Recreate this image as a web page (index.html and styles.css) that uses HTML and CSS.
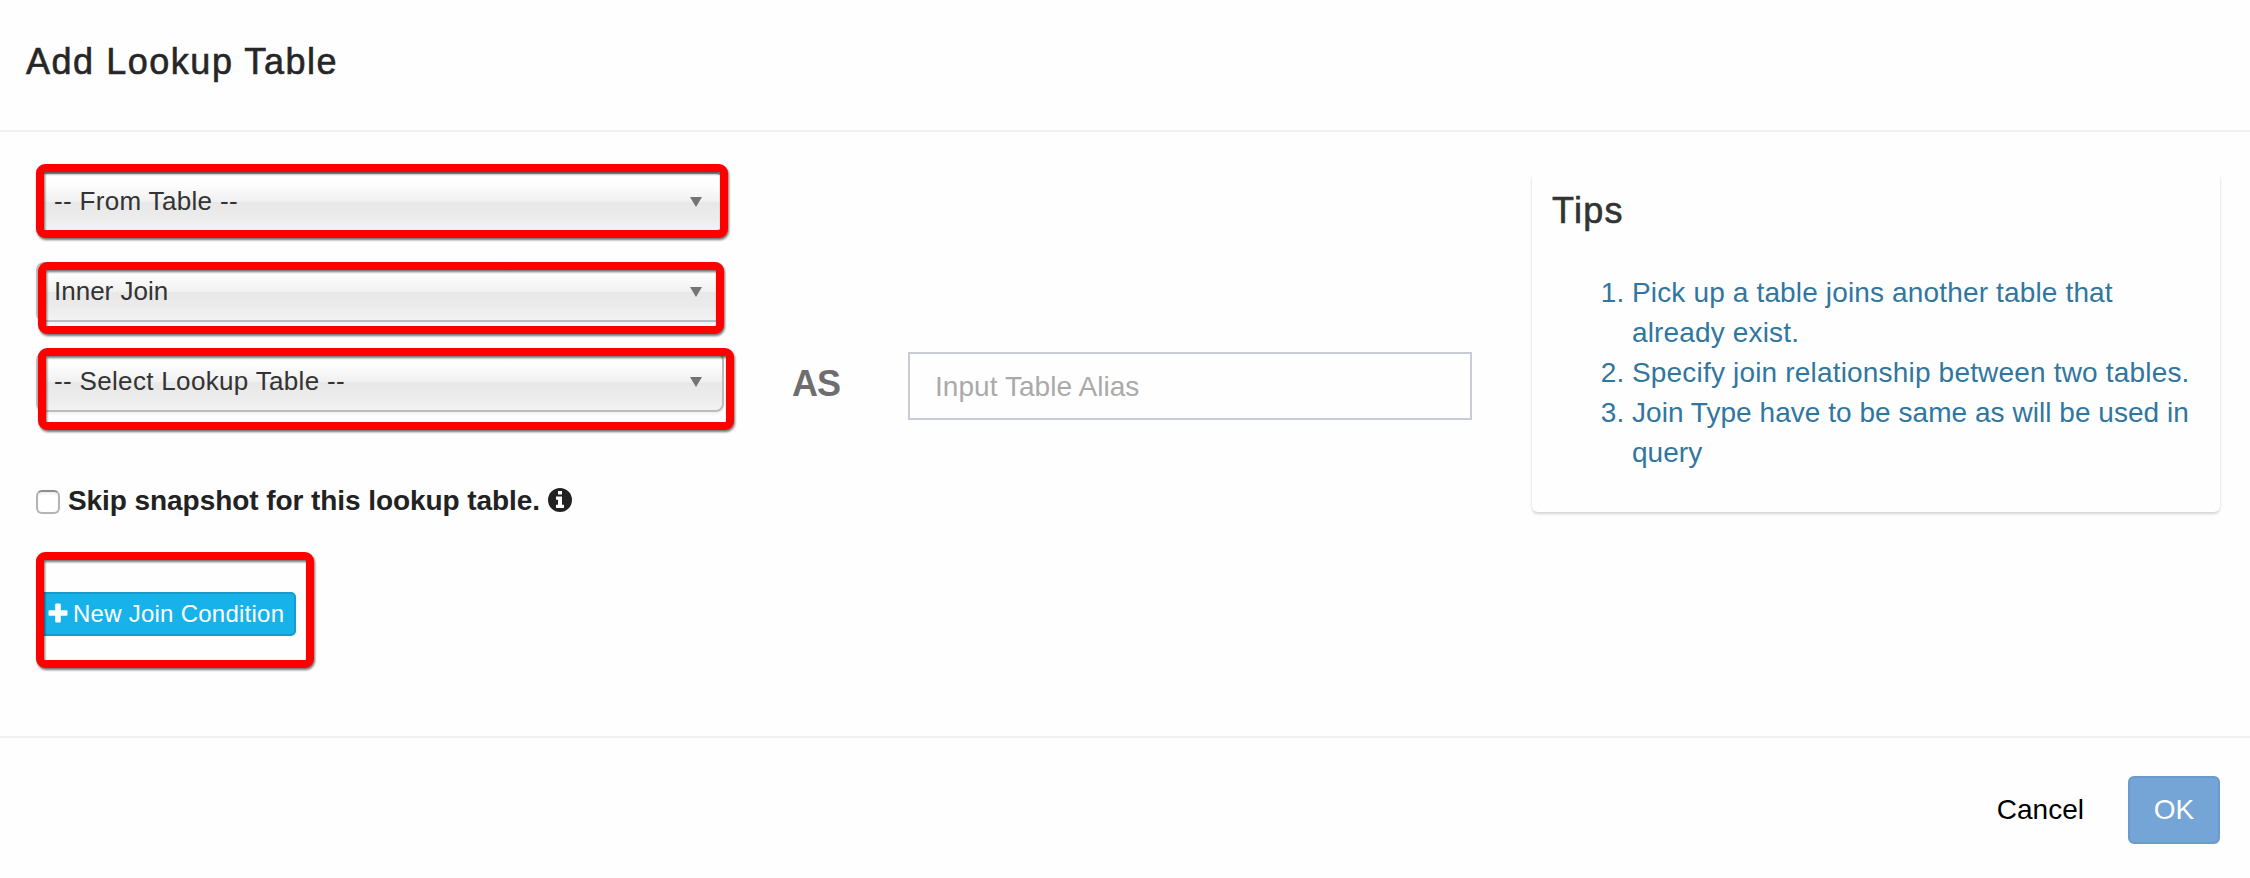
FILE: index.html
```html
<!DOCTYPE html>
<html lang="en">
<head>
<meta charset="utf-8">
<title>Add Lookup Table</title>
<link rel="stylesheet" href="styles.css">
</head>
<body>
<div class="dialog">
  <header class="dialog-header"><h1 class="dialog-title">Add Lookup Table</h1></header>
  <main class="dialog-body">
    <section class="form">
      <div class="select"><span class="label label-from">-- From Table --</span><i class="caret"></i><b class="mark mark-from"></b></div>
      <div class="select"><span class="label label-join">Inner Join</span><i class="caret"></i><b class="mark mark-join"></b></div>
      <div class="lookup-row">
        <div class="select"><span class="label label-lookup">-- Select Lookup Table --</span><i class="caret"></i><b class="mark mark-lookup"></b></div>
        <span class="as">AS</span>
        <div class="alias"><span>Input Table Alias</span></div>
      </div>
      <div class="skip-row">
        <i class="checkbox"></i>
        <span class="skip-text">Skip snapshot for this lookup table.</span>
        <svg class="info" viewBox="0 0 24 24"><circle cx="12" cy="12" r="12" fill="#222"/><path d="M10 3h4v3.4h-4zM8 8.6h6v8.2h2V20H8v-3.2h2v-5H8z" fill="#fefefe"/></svg>
      </div>
      <div class="condition">
        <div class="new-btn">
          <svg class="plus" viewBox="0 0 20 20"><path d="M8.2 0.5h3.6q1 0 1 1v5.7h5.7q1 0 1 1v3.6q0 1-1 1h-5.7v5.7q0 1-1 1H8.2q-1 0-1-1v-5.7H1.5q-1 0-1-1V8.2q0-1 1-1h5.7V1.5q0-1 1-1z" fill="#fff"/></svg>
          <span class="new-text">New Join Condition</span>
        </div>
        <b class="mark mark-new"></b>
      </div>
    </section>
    <aside class="tips">
      <h2 class="tips-title">Tips</h2>
      <ol class="tips-list">
        <li><span class="tip-a">Pick up a table joins another table that<br>already exist.</span></li>
        <li><span class="tip-b">Specify join relationship between two tables.</span></li>
        <li><span class="tip-c">Join Type have to be same as will be used in<br>query</span></li>
      </ol>
    </aside>
  </main>
  <footer class="dialog-footer">
    <span class="cancel">Cancel</span>
    <div class="ok">OK</div>
  </footer>
</div>
</body>
</html>
```
FILE: styles.css
```css
* { box-sizing: border-box; }
body { margin: 0; background: #fefefe; font-family: "Liberation Sans", Arial, sans-serif; }
.dialog { display: flex; flex-direction: column; width: 2250px; height: 878px; overflow: hidden; white-space: nowrap; }
.dialog-header { height: 132px; padding: 41px 26px 0; border-bottom: 2px solid #f0f0f0; }
.dialog-title { margin: 0; font-size: 36px; line-height: 41px; font-weight: 400; letter-spacing: 1.53px; color: #262626; -webkit-text-stroke: 0.6px #262626; }
.dialog-body { flex: 1; display: flex; justify-content: space-between; padding: 40px 30px 0 36px; }
.form { display: flex; flex-direction: column; align-items: flex-start; gap: 30px; }
.select {
  position: relative; display: flex; align-items: center; justify-content: space-between;
  width: 688px; height: 60px; padding: 0 20px 2px 16px;
  border: 2px solid #bcbcbc; border-radius: 8px;
  background: linear-gradient(#fff 0%, #fdfdfd 20%, #f0f0f0 50%, #e8e8e8 51%, #ebebeb 75%, #f2f2f2 100%);
  box-shadow: 0 2px 3px rgba(0,0,0,.06);
}
.label { font-size: 26px; line-height: 32px; color: #333; }
.label-from, .label-lookup { letter-spacing: .33px; }
.caret { width: 12px; height: 10px; background: #747474; clip-path: polygon(0 0, 100% 0, 50% 100%); margin-top: 2px; }
.mark { position: absolute; z-index: 1; border: 8px solid #fe0000; border-radius: 9px; filter: drop-shadow(1px 2px 1px rgba(0,0,0,.55)); }
.mark-from { left: -2px; top: -10px; width: 692px; height: 74px; }
.mark-join { left: 0; top: -2px; width: 686px; height: 72px; }
.mark-lookup { left: 0; top: -6px; width: 696px; height: 82px; }
.mark-new { left: 0; top: -40px; width: 278px; height: 116px; }
.lookup-row { display: flex; align-items: flex-start; height: 68px; }
.as { margin-left: 68px; width: 116px; line-height: 63px; font-size: 36px; font-weight: 700; letter-spacing: -1px; color: #6e6e6e; }
.alias { display: flex; align-items: center; width: 564px; height: 68px; padding: 1px 0 0 25px; border: 2px solid #c9cbd9; font-size: 28px; letter-spacing: .06px; color: #aaa; }
.skip-row { display: flex; align-items: center; height: 40px; margin-top: 30px; }
.checkbox { width: 24px; height: 24px; margin-top: 4px; border: 2px solid #b4b4b4; border-top-color: #8e8e8e; border-radius: 6px; background: #fff; box-shadow: inset 0 2px 2px #eee; }
.skip-text { margin-left: 8px; width: 480px; padding-top: 1px; font-size: 28px; font-weight: 700; letter-spacing: -.07px; color: #222; }
.info { width: 24px; height: 24px; }
.condition { position: relative; margin-top: 42px; }
.new-btn { display: flex; align-items: center; width: 260px; height: 44px; padding-left: 10px; background: #18b2ea; border: 2px solid #159ccd; border-radius: 5px; }
.plus { width: 20px; height: 20px; margin-bottom: 2px; }
.new-text { margin-left: 5px; font-size: 24px; color: #fff; letter-spacing: .25px; }
.tips { width: 688px; height: 340px; padding: 18px 20px 0; border-radius: 6px; box-shadow: 0 2px 3px rgba(0,0,0,.17); }
.tips-title { margin: 0; font-size: 36px; line-height: 41px; font-weight: 400; letter-spacing: 1.3px; color: #333; -webkit-text-stroke: .6px #333; }
.tips-list { margin: 42px 0 0; padding-left: 80px; font-size: 28px; line-height: 40px; color: #31769f; }
.tip-a { letter-spacing: .15px; }
.tip-b { letter-spacing: .18px; }
.tip-c { letter-spacing: .04px; }
.dialog-footer { display: flex; justify-content: flex-end; align-items: center; height: 142px; padding: 4px 30px 0; border-top: 2px solid #f0f0f0; font-size: 28px; color: #000; }
.ok { display: flex; align-items: center; justify-content: center; width: 92px; height: 68px; margin-left: 44px; background: #75a5d6; border: 2px solid #6b9bcb; border-radius: 6px; color: #fff; }
```
